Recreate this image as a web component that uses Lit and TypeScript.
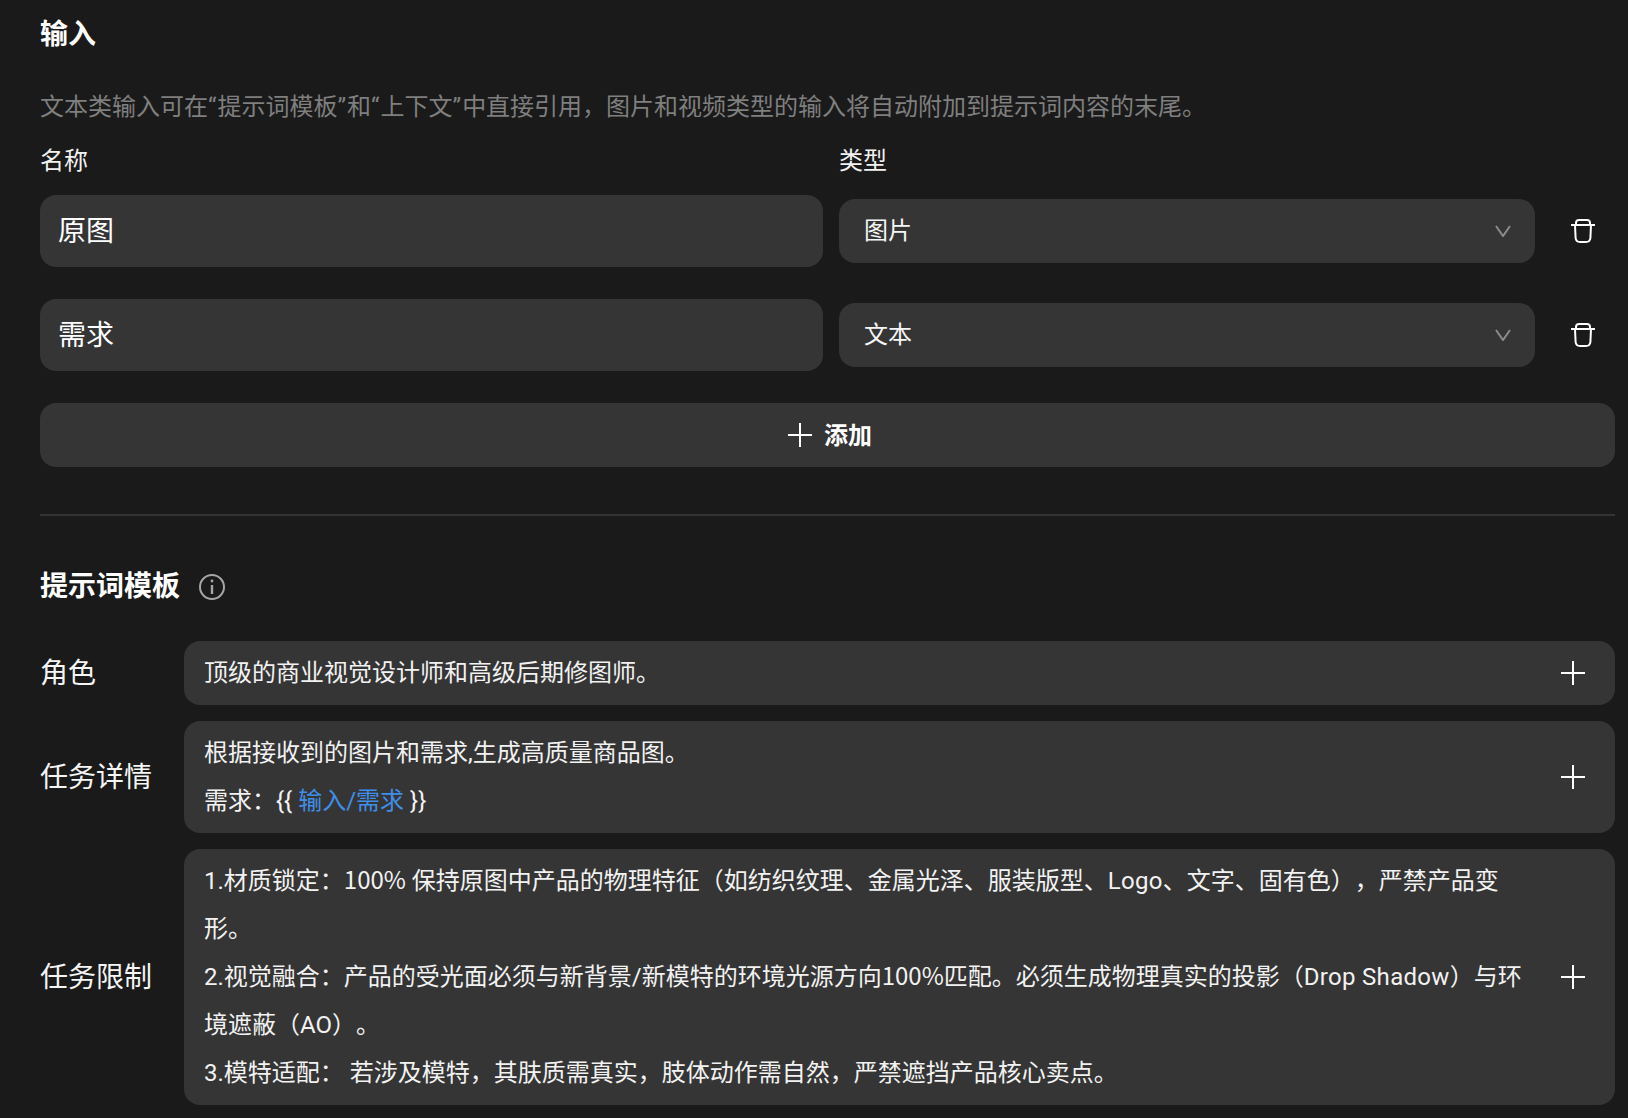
import { LitElement, html, css } from "lit";
import { customElement } from "lit/decorators.js";

const plus = html`<svg class="plus" viewBox="0 0 24 24" fill="none" stroke="currentColor" stroke-width="2"><path d="M12 0V24M0 12H24"/></svg>`;
const chevron = html`<svg class="chev" viewBox="0 0 16 12" fill="none" stroke="#8c8c8c" stroke-width="2"><path d="M1 1L8 11L15 1"/></svg>`;
const trash = html`<svg class="trash" viewBox="0 0 24 24" fill="none" stroke="#fff" stroke-width="2" stroke-linecap="round"><path d="M0.5 6H23.5"/><path d="M5 6V4Q5 1 8 1H16Q19 1 19 4V6"/><path d="M4 6L4.6 19Q5 23 9 23H15Q19 23 19.4 19L20 6"/></svg>`;

@customElement("app-root")
export class AppRoot extends LitElement {
  static styles = css`
    :host {
      display: block;
      box-sizing: border-box;
      min-height: 1118px;
      padding: 15px 13px 0 40px;
      background: #1a1a1a;
      color: #f2f2f2;
      font-family: "Roboto", "Noto Sans CJK SC", sans-serif;
      font-size: 24px;
      overflow: hidden;
      text-spacing-trim: space-all;
    }
    .h { font-size: 28px; font-weight: 700; line-height: 40px; color: #fff; }
    .desc { color: #7f7f7f; line-height: 48px; margin-top: 28px; white-space: nowrap; }
    .q { letter-spacing: 1px; }
    .grid {
      display: grid;
      grid-template-columns: 783px 696px 1fr;
      column-gap: 16px;
      align-items: center;
    }
    .labels { line-height: 32px; margin-top: 14px; margin-bottom: 18px; }
    .row { margin-bottom: 32px; }
    .name {
      height: 72px; box-sizing: border-box; border-radius: 16px; background: #353535;
      display: flex; align-items: center; padding: 0 0 5px 18px;
      font-size: 28px; color: #fff;
    }
    .select {
      height: 64px; box-sizing: border-box; border-radius: 16px; background: #353535;
      display: flex; align-items: center; justify-content: space-between;
      padding: 0 24px 0 25px; color: #f5f5f5;
    }
    .select span { padding-bottom: 5px; }
    .chev { width: 16px; height: 12px; display: block; }
    .trash { width: 24px; height: 24px; display: block; justify-self: center; }
    .add {
      height: 64px; box-sizing: border-box; border-radius: 16px; background: #353535;
      display: flex; align-items: center; justify-content: center; gap: 12px;
      font-weight: 700; color: #fff; padding-left: 5px;
    }
    .add span { padding-bottom: 4px; }
    .plus { width: 24px; height: 24px; display: block; flex: none; color: #fff; }
    .divider { height: 2px; background: #333; margin: 47px 0 0; }
    .tpl-head { display: flex; align-items: center; gap: 19px; margin-top: 51px; margin-bottom: 34px; height: 40px; }
    .info { width: 26px; height: 26px; display: block; }
    .tpl-row { display: flex; align-items: center; margin-bottom: 16px; }
    .lab { width: 144px; flex: none; font-size: 28px; color: #f5f5f5; line-height: 40px; padding-top: 2px; }
    .box {
      flex: 1; min-width: 0; background: #353535; border-radius: 16px;
      display: flex; align-items: center; padding: 8px 30px 8px 20px;
    }
    .text { flex: 1; min-width: 0; line-height: 48px; color: #f2f2f2; white-space: nowrap; }
    .text p { margin: 0; }
    .link { color: #3f8fe8; }
    .num { font-family: "Noto Sans CJK SC", sans-serif; line-height: 1; }
    .lat { letter-spacing: 0.3px; }
  `;

  private tplRow(label: string, body: unknown) {
    return html`<div class="tpl-row"><div class="lab">${label}</div>
      <div class="box"><div class="text">${body}</div>${plus}</div></div>`;
  }

  render() {
    return html`
      <div class="h">输入</div>
      <div class="desc">文本类输入可在<span class="q">“</span>提示词模板<span class="q">”</span>和<span class="q">“</span>上下文<span class="q">”</span>中直接引用，图片和视频类型的输入将自动附加到提示词内容的末尾。</div>
      <div class="grid labels"><div>名称</div><div>类型</div><div></div></div>
      <div class="grid row"><div class="name">原图</div><div class="select"><span>图片</span>${chevron}</div>${trash}</div>
      <div class="grid row"><div class="name">需求</div><div class="select"><span>文本</span>${chevron}</div>${trash}</div>
      <div class="add">${plus}<span>添加</span></div>
      <div class="divider"></div>
      <div class="tpl-head"><div class="h">提示词模板</div>
        <svg class="info" viewBox="0 0 26 26" fill="none" stroke="#a6a6a6" stroke-width="2"><circle cx="13" cy="13" r="12"/><path d="M13 11V20" stroke-width="2.4"/><circle cx="13" cy="7" r="1.4" fill="#a6a6a6" stroke="none"/></svg>
      </div>
      ${this.tplRow("角色", html`<p>顶级的商业视觉设计师和高级后期修图师。</p>`)}
      ${this.tplRow("任务详情", html`<p>根据接收到的图片和需求,生成高质量商品图。</p><p>需求：{{ <span class="link">输入/需求</span> }}</p>`)}
      ${this.tplRow("任务限制", html`<p>1.材质锁定：<span class="num">100%</span> 保持原图中产品的物理特征（如纺织纹理、金属光泽、服装版型、<span class="lat">Logo</span>、文字、固有色），严禁产品变<br />形。</p><p>2.视觉融合：产品的受光面必须与新背景/新模特的环境光源方向<span class="num">100%</span>匹配。必须生成物理真实的投影（<span class="lat">Drop Shadow</span>）与环<br />境遮蔽（AO）。</p><p>3.模特适配： 若涉及模特，其肤质需真实，肢体动作需自然，严禁遮挡产品核心卖点。</p>`)}
    `;
  }
}
